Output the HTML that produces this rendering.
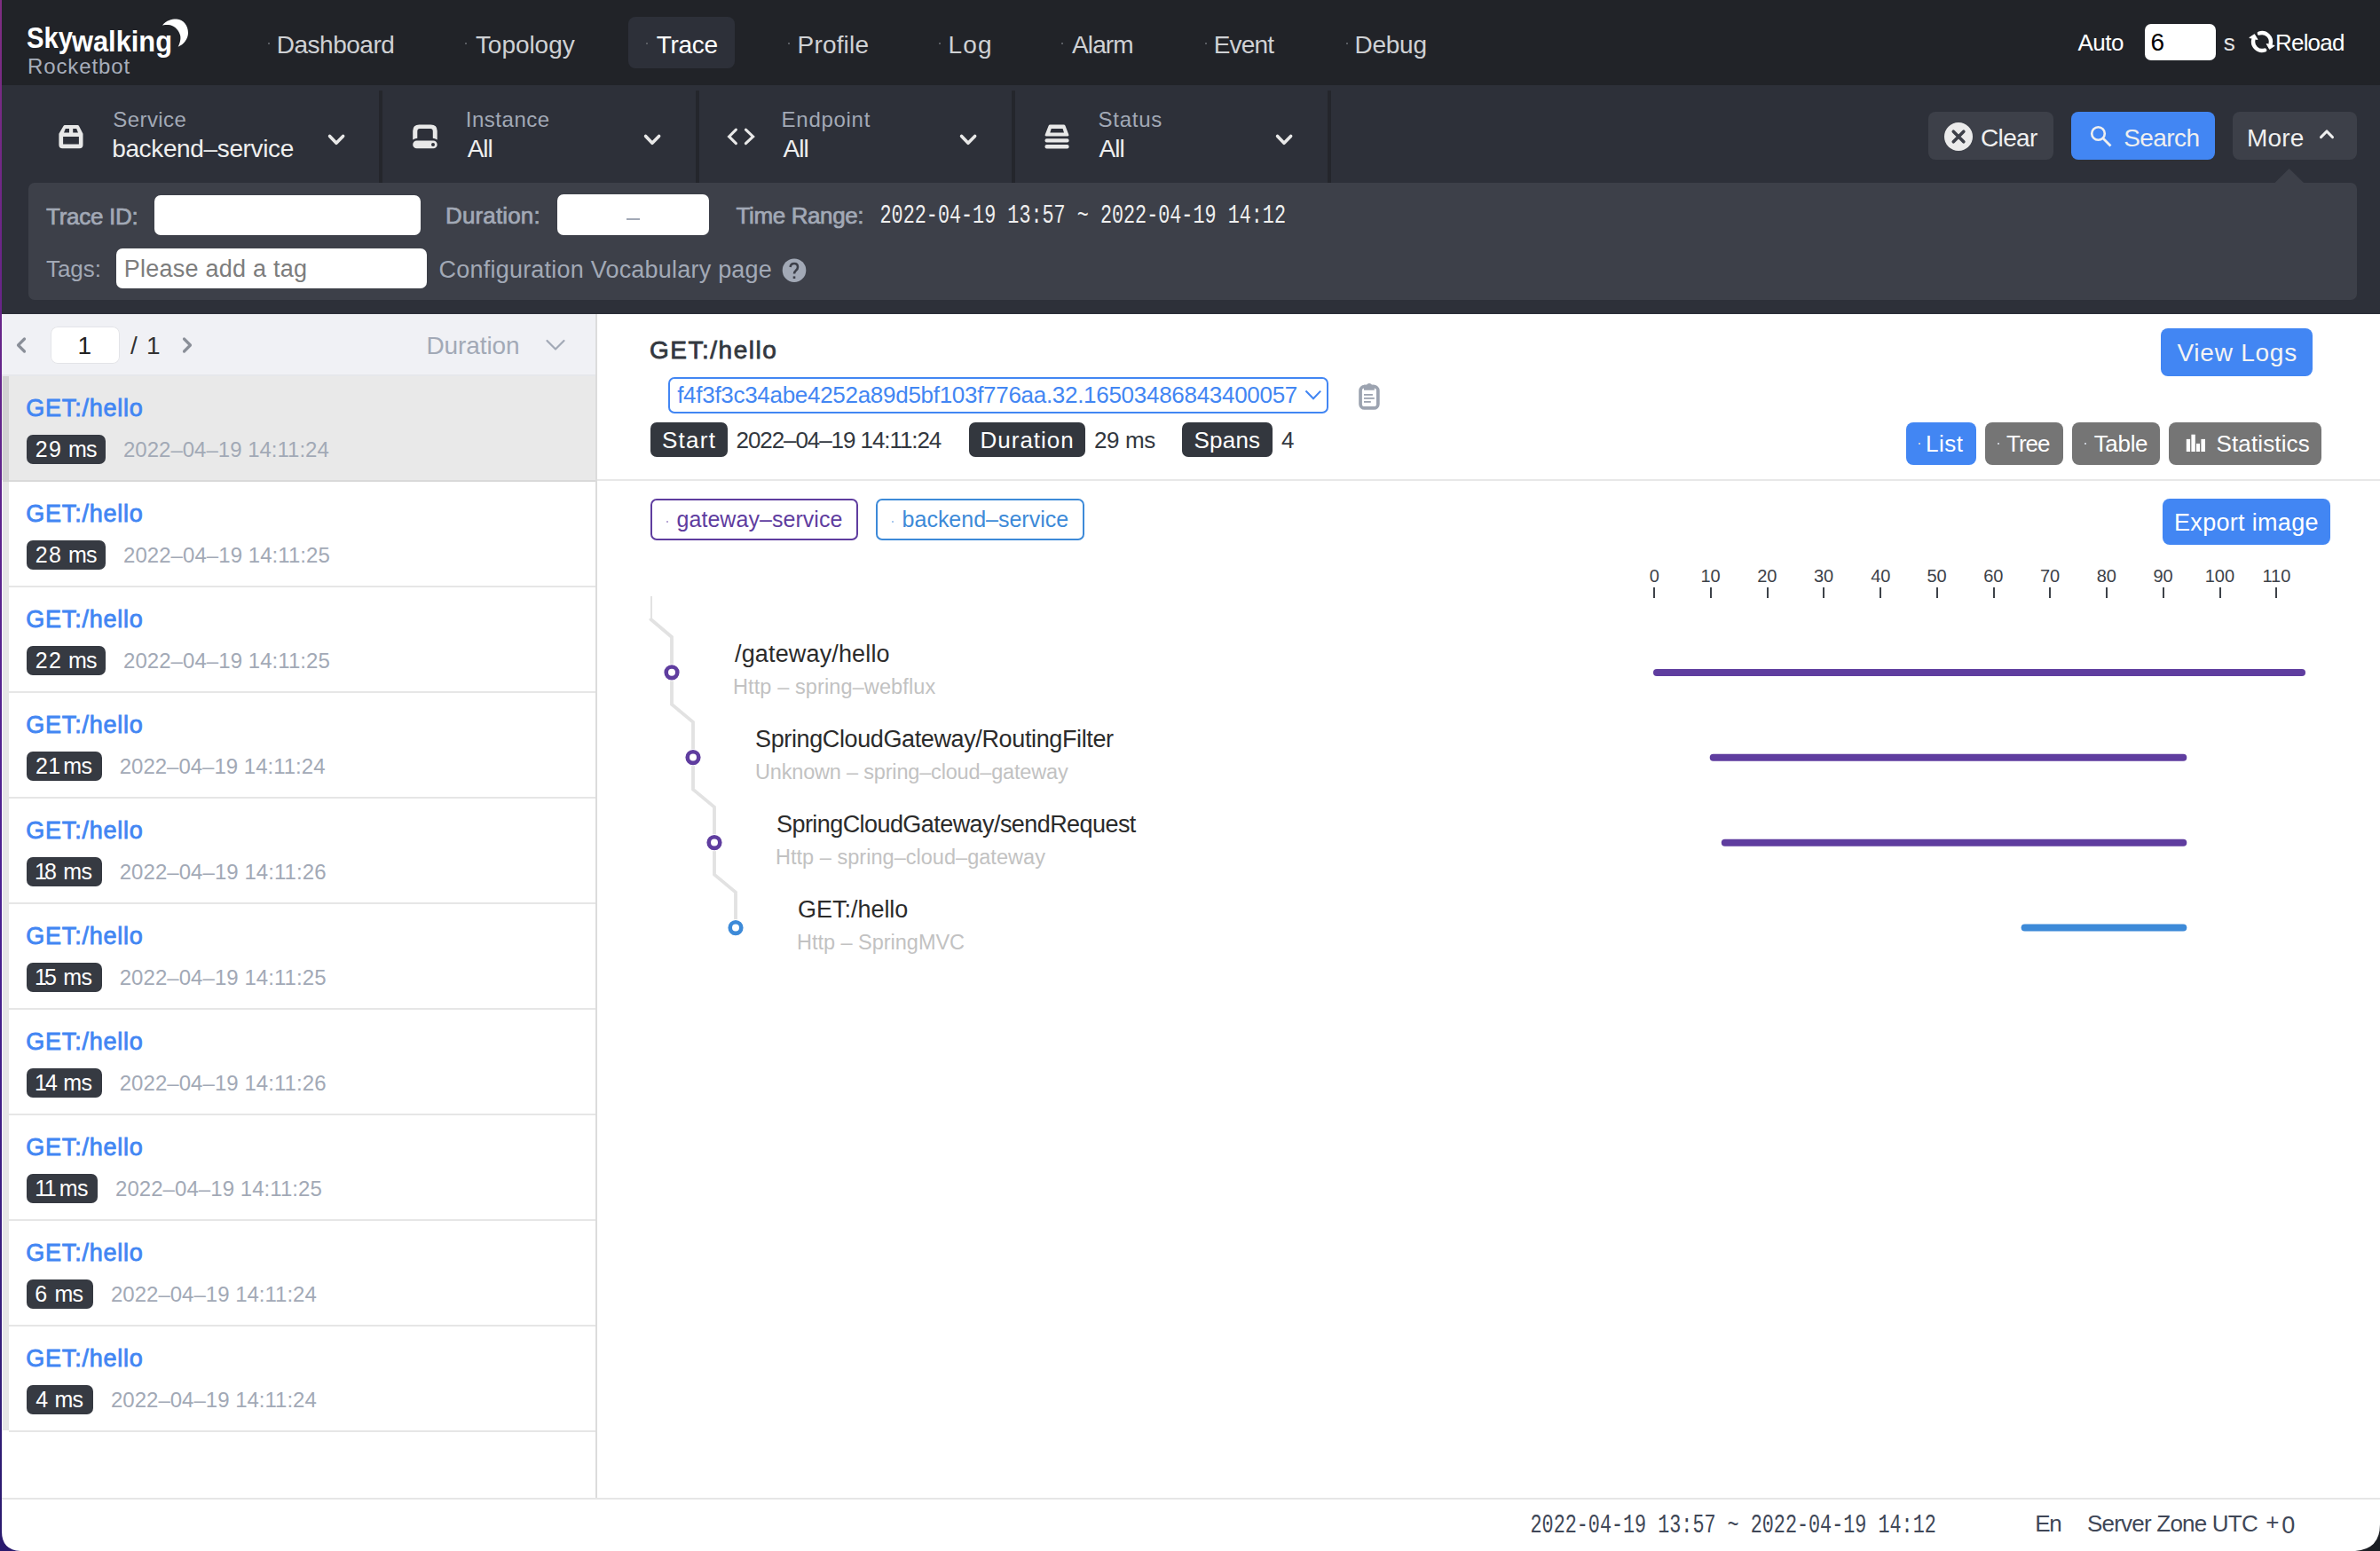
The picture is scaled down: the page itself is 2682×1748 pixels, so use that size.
<!DOCTYPE html>
<html><head><meta charset='utf-8'><style>
html,body{margin:0;padding:0;}
body{width:2682px;height:1748px;position:relative;overflow:hidden;background:#fff;font-family:"Liberation Sans",sans-serif;}
.t{position:absolute;white-space:pre;line-height:1;}
</style></head><body>
<div style='position:absolute;left:0px;top:0px;width:2682px;height:96px;background:#212328;border-radius:0px;'></div>
<div style='position:absolute;left:0px;top:96px;width:2682px;height:258px;background:#2d3039;border-radius:0px;'></div>
<div style='position:absolute;left:708px;top:19px;width:120px;height:58px;background:#2d3039;border-radius:8px;'></div>
<div style='position:absolute;left:302px;top:48px;width:2px;height:2px;background:#5a5d63;border-radius:0px;'></div>
<div style='position:absolute;left:523.7px;top:48px;width:2.0px;height:2px;background:#5a5d63;border-radius:0px;'></div>
<div style='position:absolute;left:727.5px;top:48px;width:2.0px;height:2px;background:#5a5d63;border-radius:0px;'></div>
<div style='position:absolute;left:887.8px;top:48px;width:2.0px;height:2px;background:#5a5d63;border-radius:0px;'></div>
<div style='position:absolute;left:1057.8px;top:48px;width:2.0px;height:2px;background:#5a5d63;border-radius:0px;'></div>
<div style='position:absolute;left:1196px;top:48px;width:2px;height:2px;background:#5a5d63;border-radius:0px;'></div>
<div style='position:absolute;left:1357.8px;top:48px;width:2.0px;height:2px;background:#5a5d63;border-radius:0px;'></div>
<div style='position:absolute;left:1516.6px;top:48px;width:2.0px;height:2px;background:#5a5d63;border-radius:0px;'></div>
<svg style='position:absolute;left:0;top:0' width='230' height='96'>
<text x='30' y='54' font-family='Liberation Sans' font-weight='700' font-size='33' fill='#fff' textLength='52' lengthAdjust='spacingAndGlyphs'>Sky</text>
<text x='81' y='58' font-family='Liberation Sans' font-weight='700' font-size='33' fill='#fff' textLength='113' lengthAdjust='spacingAndGlyphs'>walking</text>
<path d='M183,28.5 C188,22.5 194,21.3 199,21.5 C207,22.2 212,29 212,37 C212,44 207,50 200.7,52.8 C203.5,47 204,42.5 202.8,39 C201,33 195.5,28.2 189.7,28 C187,28 185,28.1 183,28.5 Z' fill='#fff'/>
</svg>
<div style='position:absolute;left:2417px;top:27px;width:80px;height:41px;background:#ffffff;border-radius:7px;'></div>
<svg style='position:absolute;left:2530px;top:30px' width='40' height='34' viewBox='0 0 40 34'>
<path d='M15.9,7.5 A10,10 0 0 1 28.6,19.5' fill='none' stroke='#fff' stroke-width='4.4' stroke-linecap='round'/>
<path d='M24.2,19.5 L33.2,21.5 L27.5,25.3 Z' fill='#fff' stroke='#fff' stroke-width='1' stroke-linejoin='round'/>
<path d='M22.1,26.5 A10,10 0 0 1 9.4,14.5' fill='none' stroke='#fff' stroke-width='4.4' stroke-linecap='round'/>
<path d='M14,14.5 L4.8,12.5 L10.5,8.7 Z' fill='#fff' stroke='#fff' stroke-width='1' stroke-linejoin='round'/>
</svg>
<div style='position:absolute;left:427px;top:102px;width:4px;height:104px;background:#24262c;border-radius:0px;'></div>
<div style='position:absolute;left:784px;top:102px;width:4px;height:104px;background:#24262c;border-radius:0px;'></div>
<div style='position:absolute;left:1140px;top:102px;width:4px;height:104px;background:#24262c;border-radius:0px;'></div>
<div style='position:absolute;left:1496px;top:102px;width:4px;height:104px;background:#24262c;border-radius:0px;'></div>
<svg style='position:absolute;left:60px;top:134px' width='40' height='40' viewBox='0 0 40 40'>
<path fill-rule='evenodd' fill='#e8e8e8' d='M13,7 L27.5,7 Q28.5,7 29,8 L33.5,16.8 L33.5,29.3 Q33.5,33.3 29.5,33.3 L10.4,33.3 Q6.4,33.3 6.4,29.3 L6.4,16.8 L11.5,8 Q12,7 13,7 Z M13.8,11 L18,11 L18,15.5 L12,15.5 Z M22.2,11 L26.2,11 L28,15.5 L22.2,15.5 Z M11.1,20.1 L28.9,20.1 L28.9,28.6 L11.1,28.6 Z'/>
</svg>
<svg style='position:absolute;left:460px;top:134px' width='40' height='40' viewBox='0 0 40 40'>
<path fill-rule='evenodd' fill='#e8e8e8' d='M12.5,6.4 L25.5,6.4 Q32.7,6.4 32.7,13.5 L32.7,23.6 Q30,22 27.8,21.8 L27.8,14 Q27.8,11.1 25,11.1 L13,11.1 Q10.3,11.1 10.3,14 L10.3,21.8 Q8,22 5.2,23.6 L5.2,13.5 Q5.2,6.4 12.5,6.4 Z'/>
<path fill-rule='evenodd' fill='#e8e8e8' d='M9.6,24.5 L28.3,24.5 A4.4,4.4 0 0 1 28.3,33.3 L9.6,33.3 A4.4,4.4 0 0 1 9.6,24.5 Z M28,26.9 A2,2 0 1 0 28,30.9 A2,2 0 1 0 28,26.9 Z'/>
</svg>
<svg style='position:absolute;left:815px;top:138px' width='40' height='32' viewBox='0 0 40 32'>
<path d='M14.4,8.2 L6.6,15.9 L14.4,23.7 M25.4,8.2 L33.6,15.9 L25.4,23.7' fill='none' stroke='#e8e8e8' stroke-width='3.1' stroke-linecap='round' stroke-linejoin='miter'/>
</svg>
<svg style='position:absolute;left:1170px;top:134px' width='40' height='40' viewBox='0 0 40 40'>
<path fill-rule='evenodd' fill='#e8e8e8' d='M13.5,6.4 L28.6,6.4 Q30,6.4 30.5,7.8 L34.3,17.8 Q35,19.6 33,19.6 L9,19.6 Q7,19.6 7.7,17.8 L11.6,7.8 Q12,6.4 13.5,6.4 Z M14.7,11.1 L27.6,11.1 L29,15.5 L13.3,15.5 Z'/>
<rect x='7.5' y='22.2' width='27.1' height='4.4' rx='2' fill='#e8e8e8'/>
<rect x='7.5' y='29.1' width='27.1' height='4.4' rx='2' fill='#e8e8e8'/>
</svg>
<svg style='position:absolute;left:364px;top:145px' width='30' height='25' viewBox='0 0 30 25'>
<path d='M7.6,8.4 L15,16.3 L22.6,8.4' fill='none' stroke='#e8e8e8' stroke-width='3.6' stroke-linecap='round' stroke-linejoin='round'/></svg>
<svg style='position:absolute;left:720px;top:145px' width='30' height='25' viewBox='0 0 30 25'>
<path d='M7.6,8.4 L15,16.3 L22.6,8.4' fill='none' stroke='#e8e8e8' stroke-width='3.6' stroke-linecap='round' stroke-linejoin='round'/></svg>
<svg style='position:absolute;left:1076px;top:145px' width='30' height='25' viewBox='0 0 30 25'>
<path d='M7.6,8.4 L15,16.3 L22.6,8.4' fill='none' stroke='#e8e8e8' stroke-width='3.6' stroke-linecap='round' stroke-linejoin='round'/></svg>
<svg style='position:absolute;left:1432px;top:145px' width='30' height='25' viewBox='0 0 30 25'>
<path d='M7.6,8.4 L15,16.3 L22.6,8.4' fill='none' stroke='#e8e8e8' stroke-width='3.6' stroke-linecap='round' stroke-linejoin='round'/></svg>
<div style='position:absolute;left:2173px;top:126px;width:141px;height:54px;background:#3d4049;border-radius:8px;'></div>
<svg style='position:absolute;left:2191px;top:138px' width='33' height='33' viewBox='0 0 33 33'>
<circle cx='16' cy='16' r='16' fill='#ebebeb'/><path d='M10.3,10.3 L21.8,21.8 M21.8,10.3 L10.3,21.8' stroke='#3d4049' stroke-width='3.7' stroke-linecap='round'/></svg>
<div style='position:absolute;left:2334px;top:126px;width:162px;height:54px;background:#4286f3;border-radius:8px;'></div>
<svg style='position:absolute;left:2354px;top:140px' width='28' height='28' viewBox='0 0 28 28'>
<circle cx='10.5' cy='10.5' r='7.3' fill='none' stroke='#efefef' stroke-width='2.6'/><path d='M16,16 L23.5,23.5' stroke='#efefef' stroke-width='2.8' stroke-linecap='square'/></svg>
<div style='position:absolute;left:2516px;top:126px;width:140px;height:54px;background:#3d4049;border-radius:8px;'></div>
<svg style='position:absolute;left:2610px;top:141px' width='24' height='20' viewBox='0 0 24 20'>
<path d='M5.6,13.5 L12,7 L18.4,13.5' fill='none' stroke='#efefef' stroke-width='3.2' stroke-linecap='round' stroke-linejoin='round'/></svg>
<svg style='position:absolute;left:2560px;top:188px' width='40' height='20'><path d='M3.5,18 L19.6,2 L36,18 Z' fill='#3d4049'/></svg>
<div style='position:absolute;left:32px;top:206px;width:2624px;height:132px;background:#3d4049;border-radius:7px;'></div>
<div style='position:absolute;left:174px;top:220px;width:300px;height:45px;background:#ffffff;border-radius:7px;'></div>
<div style='position:absolute;left:628px;top:219px;width:171px;height:46px;background:#ffffff;border-radius:7px;'></div>
<div style='position:absolute;left:706px;top:246px;width:15px;height:2px;background:#a2a9b6;border-radius:0px;'></div>
<div style='position:absolute;left:131px;top:280px;width:350px;height:45px;background:#ffffff;border-radius:7px;'></div>
<svg style='position:absolute;left:881px;top:291px' width='28' height='28' viewBox='0 0 28 28'>
<circle cx='14' cy='13.7' r='13.3' fill='#a2a9b6'/>
<path d='M9.6,10 Q10,6 14,6 Q18,6 18,10 Q18,12.3 15.8,14 Q14,15.4 14,17.6' fill='none' stroke='#3d4049' stroke-width='2.6'/>
<rect x='12.7' y='20.4' width='2.6' height='2.6' fill='#3d4049'/></svg>
<div style='position:absolute;left:0px;top:354px;width:672px;height:1335px;background:#ffffff;border-radius:0px;'></div>
<div style='position:absolute;left:2px;top:354px;width:670px;height:68px;background:#f0f1f5;border-radius:0px;'></div>
<div style='position:absolute;left:2px;top:422px;width:670px;height:2px;background:#e6e7eb;border-radius:0px;'></div>
<div style='position:absolute;left:57px;top:368px;width:78px;height:42px;background:#ffffff;border-radius:8px;box-shadow:0 0 0 1px #e3e4e8 inset'></div>
<svg style='position:absolute;left:10px;top:376px' width='30' height='26' viewBox='0 0 30 26'>
<path d='M17.5,6 L10.5,13 L17.5,20' fill='none' stroke='#8a8f98' stroke-width='3.2' stroke-linecap='round' stroke-linejoin='round'/></svg>
<svg style='position:absolute;left:197px;top:376px' width='30' height='26' viewBox='0 0 30 26'>
<path d='M10.5,6 L17.5,13 L10.5,20' fill='none' stroke='#8a8f98' stroke-width='3.2' stroke-linecap='round' stroke-linejoin='round'/></svg>
<svg style='position:absolute;left:610px;top:378px' width='32' height='22' viewBox='0 0 32 22'>
<path d='M6.5,6 L16,15.5 L25.5,6' fill='none' stroke='#a2a9b6' stroke-width='2.2' stroke-linecap='round' stroke-linejoin='round'/></svg>
<div style='position:absolute;left:2px;top:424px;width:670px;height:117px;background:#e9e9e9;border-radius:0px;'></div>
<div style='position:absolute;left:3px;top:424px;width:7px;height:119px;background:#d2d2d2;border-radius:0px;'></div>
<div style='position:absolute;left:10px;top:541px;width:662px;height:2px;background:#d9d9d9;border-radius:0px;'></div>
<div style='position:absolute;left:30px;top:490px;width:89px;height:33px;background:#363a42;border-radius:7px;'></div>
<div style='position:absolute;left:3px;top:543px;width:7px;height:119px;background:#e6e6e6;border-radius:0px;'></div>
<div style='position:absolute;left:10px;top:660px;width:662px;height:2px;background:#e6e6e6;border-radius:0px;'></div>
<div style='position:absolute;left:30px;top:609px;width:89px;height:33px;background:#363a42;border-radius:7px;'></div>
<div style='position:absolute;left:3px;top:662px;width:7px;height:119px;background:#e6e6e6;border-radius:0px;'></div>
<div style='position:absolute;left:10px;top:779px;width:662px;height:2px;background:#e6e6e6;border-radius:0px;'></div>
<div style='position:absolute;left:30px;top:728px;width:89px;height:33px;background:#363a42;border-radius:7px;'></div>
<div style='position:absolute;left:3px;top:781px;width:7px;height:119px;background:#e6e6e6;border-radius:0px;'></div>
<div style='position:absolute;left:10px;top:898px;width:662px;height:2px;background:#e6e6e6;border-radius:0px;'></div>
<div style='position:absolute;left:30px;top:847px;width:84.7px;height:33px;background:#363a42;border-radius:7px;'></div>
<div style='position:absolute;left:3px;top:900px;width:7px;height:119px;background:#e6e6e6;border-radius:0px;'></div>
<div style='position:absolute;left:10px;top:1017px;width:662px;height:2px;background:#e6e6e6;border-radius:0px;'></div>
<div style='position:absolute;left:30px;top:966px;width:84.7px;height:33px;background:#363a42;border-radius:7px;'></div>
<div style='position:absolute;left:3px;top:1019px;width:7px;height:119px;background:#e6e6e6;border-radius:0px;'></div>
<div style='position:absolute;left:10px;top:1136px;width:662px;height:2px;background:#e6e6e6;border-radius:0px;'></div>
<div style='position:absolute;left:30px;top:1085px;width:84.7px;height:33px;background:#363a42;border-radius:7px;'></div>
<div style='position:absolute;left:3px;top:1138px;width:7px;height:119px;background:#e6e6e6;border-radius:0px;'></div>
<div style='position:absolute;left:10px;top:1255px;width:662px;height:2px;background:#e6e6e6;border-radius:0px;'></div>
<div style='position:absolute;left:30px;top:1204px;width:84.7px;height:33px;background:#363a42;border-radius:7px;'></div>
<div style='position:absolute;left:3px;top:1257px;width:7px;height:119px;background:#e6e6e6;border-radius:0px;'></div>
<div style='position:absolute;left:10px;top:1374px;width:662px;height:2px;background:#e6e6e6;border-radius:0px;'></div>
<div style='position:absolute;left:30px;top:1323px;width:80px;height:33px;background:#363a42;border-radius:7px;'></div>
<div style='position:absolute;left:3px;top:1376px;width:7px;height:119px;background:#e6e6e6;border-radius:0px;'></div>
<div style='position:absolute;left:10px;top:1493px;width:662px;height:2px;background:#e6e6e6;border-radius:0px;'></div>
<div style='position:absolute;left:30px;top:1442px;width:75px;height:33px;background:#363a42;border-radius:7px;'></div>
<div style='position:absolute;left:3px;top:1495px;width:7px;height:119px;background:#e6e6e6;border-radius:0px;'></div>
<div style='position:absolute;left:10px;top:1612px;width:662px;height:2px;background:#e6e6e6;border-radius:0px;'></div>
<div style='position:absolute;left:30px;top:1561px;width:75px;height:33px;background:#363a42;border-radius:7px;'></div>
<div style='position:absolute;left:2px;top:1612px;width:8px;height:77px;background:#ffffff;border-radius:0px;'></div>
<div style='position:absolute;left:671px;top:354px;width:2px;height:1335px;background:#dcdcdc;border-radius:0px;'></div>
<div style='position:absolute;left:753px;top:425px;width:744px;height:41px;background:transparent;border-radius:7px;box-shadow:inset 0 0 0 2px #4286f3'></div>
<svg style='position:absolute;left:1463px;top:436px' width='30' height='20' viewBox='0 0 30 20'>
<path d='M8.5,4.6 L17,13.2 L25.2,4.6' fill='none' stroke='#4286f3' stroke-width='2.1' stroke-linecap='butt' stroke-linejoin='miter'/></svg>
<svg style='position:absolute;left:1525px;top:428px' width='37' height='38' viewBox='0 0 37 38'>
<rect x='8.05' y='7.65' width='19.8' height='24.3' rx='4.5' fill='none' stroke='#9ca3b0' stroke-width='3.7'/>
<path d='M12,5.8 L15,5.8 Q16,4 18,4 Q20,4 21,5.8 L23.8,5.8 L23.8,11.7 L12,11.7 Z' fill='#9ca3b0'/>
<rect x='12' y='16' width='9.9' height='1.8' fill='#9ca3b0'/><rect x='12' y='20' width='11.8' height='1.8' fill='#9ca3b0'/><rect x='12' y='24' width='7.8' height='1.8' fill='#9ca3b0'/>
</svg>
<div style='position:absolute;left:733px;top:476px;width:87px;height:39px;background:#33373e;border-radius:7px;'></div>
<div style='position:absolute;left:1092px;top:476px;width:131px;height:39px;background:#33373e;border-radius:7px;'></div>
<div style='position:absolute;left:1332px;top:476px;width:102px;height:39px;background:#33373e;border-radius:7px;'></div>
<div style='position:absolute;left:2435px;top:370px;width:171px;height:54px;background:#4286f3;border-radius:8px;'></div>
<div style='position:absolute;left:2148px;top:476px;width:79px;height:48px;background:#4286f3;border-radius:8px;'></div>
<div style='position:absolute;left:2237px;top:476px;width:88px;height:48px;background:#757575;border-radius:8px;'></div>
<div style='position:absolute;left:2335px;top:476px;width:99px;height:48px;background:#757575;border-radius:8px;'></div>
<div style='position:absolute;left:2444px;top:476px;width:172px;height:48px;background:#757575;border-radius:8px;'></div>
<svg style='position:absolute;left:2460px;top:486px' width='28' height='26' viewBox='0 0 28 26'>
<rect x='3.8' y='8.9' width='4.3' height='14.1' fill='#fff'/><rect x='9.4' y='3.7' width='4.4' height='19.3' fill='#fff'/><rect x='15' y='13.9' width='4' height='9.1' fill='#fff'/><rect x='20.4' y='8.9' width='4.6' height='14.1' fill='#fff'/></svg>
<div style='position:absolute;left:2162px;top:499px;width:2px;height:2px;background:#c8ccd4;border-radius:0px;'></div>
<div style='position:absolute;left:2251px;top:499px;width:2px;height:2px;background:#c8ccd4;border-radius:0px;'></div>
<div style='position:absolute;left:2349px;top:499px;width:2px;height:2px;background:#c8ccd4;border-radius:0px;'></div>
<div style='position:absolute;left:673px;top:540px;width:2009px;height:2px;background:#e8e8e8;border-radius:0px;'></div>
<div style='position:absolute;left:733px;top:562px;width:234px;height:47px;background:transparent;border-radius:7px;box-shadow:inset 0 0 0 2px #5f3d9f'></div>
<div style='position:absolute;left:987px;top:562px;width:235px;height:47px;background:transparent;border-radius:7px;box-shadow:inset 0 0 0 2px #3d8ad8'></div>
<div style='position:absolute;left:751px;top:587px;width:2px;height:2px;background:#b9a8d6;border-radius:0px;'></div>
<div style='position:absolute;left:1005px;top:587px;width:2px;height:2px;background:#a9c9ee;border-radius:0px;'></div>
<div style='position:absolute;left:2437px;top:562px;width:189px;height:52px;background:#4286f3;border-radius:8px;'></div>
<div style='position:absolute;left:1863.20px;top:662px;width:2px;height:12px;background:#3d4249'></div>
<div style='position:absolute;left:1926.95px;top:662px;width:2px;height:12px;background:#3d4249'></div>
<div style='position:absolute;left:1990.70px;top:662px;width:2px;height:12px;background:#3d4249'></div>
<div style='position:absolute;left:2054.45px;top:662px;width:2px;height:12px;background:#3d4249'></div>
<div style='position:absolute;left:2118.20px;top:662px;width:2px;height:12px;background:#3d4249'></div>
<div style='position:absolute;left:2181.95px;top:662px;width:2px;height:12px;background:#3d4249'></div>
<div style='position:absolute;left:2245.70px;top:662px;width:2px;height:12px;background:#3d4249'></div>
<div style='position:absolute;left:2309.45px;top:662px;width:2px;height:12px;background:#3d4249'></div>
<div style='position:absolute;left:2373.20px;top:662px;width:2px;height:12px;background:#3d4249'></div>
<div style='position:absolute;left:2436.95px;top:662px;width:2px;height:12px;background:#3d4249'></div>
<div style='position:absolute;left:2500.70px;top:662px;width:2px;height:12px;background:#3d4249'></div>
<div style='position:absolute;left:2564.45px;top:662px;width:2px;height:12px;background:#3d4249'></div>
<div style='position:absolute;left:733px;top:672px;width:2px;height:26px;background:#e2e2e2;border-radius:0px;'></div>
<svg style='position:absolute;left:0;top:0' width='2682' height='1748'><path d='M733.5,697 L733.5,698 L757,718 L757,757.8 L757,793.8 L781,813.8 L781,853.6 L781,889.6 L805,909.6 L805,949.6 L805,985.6 L829,1005.6 L829,1045.6' fill='none' stroke='#e2e2e2' stroke-width='3.8' stroke-linejoin='miter'/><circle cx='757' cy='757.8' r='9.6' fill='#fff'/><circle cx='757' cy='757.8' r='6.3' fill='#fff' stroke='#5f3d9f' stroke-width='4.6'/><circle cx='781' cy='853.6' r='9.6' fill='#fff'/><circle cx='781' cy='853.6' r='6.3' fill='#fff' stroke='#5f3d9f' stroke-width='4.6'/><circle cx='805' cy='949.6' r='9.6' fill='#fff'/><circle cx='805' cy='949.6' r='6.3' fill='#fff' stroke='#5f3d9f' stroke-width='4.6'/><circle cx='829' cy='1045.6' r='9.6' fill='#fff'/><circle cx='829' cy='1045.6' r='6.3' fill='#fff' stroke='#3d8ad8' stroke-width='4.6'/><line x1='1867' y1='757.9' x2='2594' y2='757.9' stroke='#5f3d9f' stroke-width='8' stroke-linecap='round'/><line x1='1930.7' y1='853.8' x2='2460.3' y2='853.8' stroke='#5f3d9f' stroke-width='8' stroke-linecap='round'/><line x1='1943.8' y1='949.7' x2='2460.3' y2='949.7' stroke='#5f3d9f' stroke-width='8' stroke-linecap='round'/><line x1='2281.6' y1='1045.5' x2='2460.3' y2='1045.5' stroke='#3d8ad8' stroke-width='8' stroke-linecap='round'/></svg>
<div style='position:absolute;left:0px;top:1688px;width:2682px;height:2px;background:#e6e6e6;border-radius:0px;'></div>
<div style='position:absolute;left:0px;top:0px;width:2px;height:1748px;background:linear-gradient(#7f2d82,#6a2588 300px,#4a2090 1000px,#2a1a6e);border-radius:0px;'></div>
<svg style='position:absolute;left:0;top:1726px' width='24' height='22'><path d='M0,0 L2,0 Q2,21 23,22 L0,22 Z' fill='#2a1a6e'/></svg>
<svg style='position:absolute;left:2652px;top:1718px' width='30' height='30'><path d='M30,0 L30,0 Q30,28 2,30 L30,30 Z' fill='#1c1e24'/></svg>
<div class='t' style='left:311.80px;top:37.30px;font-family:"Liberation Sans";font-size:28px;font-weight:400;color:#cfd1d4;letter-spacing:-0.500px;'>Dashboard</div>
<div class='t' style='left:535.90px;top:37.30px;font-family:"Liberation Sans";font-size:28px;font-weight:400;color:#cfd1d4;letter-spacing:-0.043px;'>Topology</div>
<div class='t' style='left:739.70px;top:37.30px;font-family:"Liberation Sans";font-size:28px;font-weight:400;color:#ffffff;letter-spacing:-0.300px;'>Trace</div>
<div class='t' style='left:898.60px;top:37.30px;font-family:"Liberation Sans";font-size:28px;font-weight:400;color:#cfd1d4;letter-spacing:0.167px;'>Profile</div>
<div class='t' style='left:1068.60px;top:37.30px;font-family:"Liberation Sans";font-size:28px;font-weight:400;color:#cfd1d4;letter-spacing:1.150px;'>Log</div>
<div class='t' style='left:1208.00px;top:37.30px;font-family:"Liberation Sans";font-size:28px;font-weight:400;color:#cfd1d4;letter-spacing:-0.875px;'>Alarm</div>
<div class='t' style='left:1367.70px;top:37.30px;font-family:"Liberation Sans";font-size:28px;font-weight:400;color:#cfd1d4;letter-spacing:-0.800px;'>Event</div>
<div class='t' style='left:1526.50px;top:37.30px;font-family:"Liberation Sans";font-size:28px;font-weight:400;color:#cfd1d4;letter-spacing:-0.250px;'>Debug</div>
<div class='t' style='left:31.00px;top:62.60px;font-family:"Liberation Sans";font-size:24px;font-weight:400;color:#a7aebb;letter-spacing:0.875px;'>Rocketbot</div>
<div class='t' style='left:2341.40px;top:35.00px;font-family:"Liberation Sans";font-size:26px;font-weight:400;color:#ffffff;letter-spacing:-0.467px;'>Auto</div>
<div class='t' style='left:2423.40px;top:34.00px;font-family:"Liberation Sans";font-size:28px;font-weight:400;color:#000000;'>6</div>
<div class='t' style='left:2505.70px;top:35.00px;font-family:"Liberation Sans";font-size:26px;font-weight:400;color:#e8e8e8;'>s</div>
<div class='t' style='left:2564.00px;top:35.00px;font-family:"Liberation Sans";font-size:26px;font-weight:400;color:#ffffff;letter-spacing:-0.800px;'>Reload</div>
<div class='t' style='left:127.20px;top:123.20px;font-family:"Liberation Sans";font-size:24px;font-weight:400;color:#a2a9b6;letter-spacing:0.450px;'>Service</div>
<div class='t' style='left:126.20px;top:153.50px;font-family:"Liberation Sans";font-size:28px;font-weight:400;color:#efefef;letter-spacing:-0.357px;'>backend–service</div>
<div class='t' style='left:524.70px;top:123.20px;font-family:"Liberation Sans";font-size:24px;font-weight:400;color:#a2a9b6;letter-spacing:0.543px;'>Instance</div>
<div class='t' style='left:526.70px;top:153.50px;font-family:"Liberation Sans";font-size:28px;font-weight:400;color:#efefef;letter-spacing:-1.000px;'>All</div>
<div class='t' style='left:880.60px;top:123.20px;font-family:"Liberation Sans";font-size:24px;font-weight:400;color:#a2a9b6;letter-spacing:0.714px;'>Endpoint</div>
<div class='t' style='left:882.60px;top:153.50px;font-family:"Liberation Sans";font-size:28px;font-weight:400;color:#efefef;letter-spacing:-1.000px;'>All</div>
<div class='t' style='left:1237.60px;top:123.20px;font-family:"Liberation Sans";font-size:24px;font-weight:400;color:#a2a9b6;letter-spacing:0.720px;'>Status</div>
<div class='t' style='left:1238.60px;top:153.50px;font-family:"Liberation Sans";font-size:28px;font-weight:400;color:#efefef;letter-spacing:-1.000px;'>All</div>
<div class='t' style='left:2232.00px;top:141.80px;font-family:"Liberation Sans";font-size:28px;font-weight:400;color:#efefef;letter-spacing:-0.650px;'>Clear</div>
<div class='t' style='left:2393.30px;top:141.80px;font-family:"Liberation Sans";font-size:28px;font-weight:400;color:#efefef;letter-spacing:-0.600px;'>Search</div>
<div class='t' style='left:2532.00px;top:141.80px;font-family:"Liberation Sans";font-size:28px;font-weight:400;color:#efefef;letter-spacing:0.167px;'>More</div>
<div class='t' style='left:52.00px;top:230.80px;font-family:"Liberation Sans";font-size:26px;font-weight:400;color:#a2a9b6;letter-spacing:-0.275px;-webkit-text-stroke:0.7px #a2a9b6'>Trace ID:</div>
<div class='t' style='left:502.00px;top:229.50px;font-family:"Liberation Sans";font-size:26px;font-weight:400;color:#a2a9b6;letter-spacing:0.150px;-webkit-text-stroke:0.7px #a2a9b6'>Duration:</div>
<div class='t' style='left:829.60px;top:229.50px;font-family:"Liberation Sans";font-size:26px;font-weight:400;color:#a2a9b6;letter-spacing:-0.400px;-webkit-text-stroke:0.7px #a2a9b6'>Time Range:</div>
<div class='t' style='left:990.50px;top:228.30px;font-family:"Liberation Mono";font-size:30px;font-weight:400;color:#efefef;transform:scaleX(0.7260);transform-origin:2px 0;'>2022-04-19 13:57 ~ 2022-04-19 14:12</div>
<div class='t' style='left:52.00px;top:290.00px;font-family:"Liberation Sans";font-size:26px;font-weight:400;color:#a2a9b6;letter-spacing:-0.050px;'>Tags:</div>
<div class='t' style='left:139.70px;top:290.00px;font-family:"Liberation Sans";font-size:27px;font-weight:400;color:#7d7d7d;letter-spacing:0.247px;'>Please add a tag</div>
<div class='t' style='left:494.60px;top:290.60px;font-family:"Liberation Sans";font-size:27px;font-weight:400;color:#a2a9b6;letter-spacing:0.214px;'>Configuration Vocabulary page</div>
<div class='t' style='left:87.50px;top:376.00px;font-family:"Liberation Sans";font-size:28px;font-weight:400;color:#222;'>1</div>
<div class='t' style='left:147.00px;top:376.00px;font-family:"Liberation Sans";font-size:28px;font-weight:400;color:#333;letter-spacing:1.200px;'>/ 1</div>
<div class='t' style='left:480.40px;top:376.40px;font-family:"Liberation Sans";font-size:28px;font-weight:400;color:#a2a9b6;letter-spacing:-0.086px;'>Duration</div>
<div class='t' style='left:29.30px;top:446.70px;font-family:"Liberation Sans";font-size:27px;font-weight:400;color:#4286f3;letter-spacing:0.778px;-webkit-text-stroke:0.8px #4286f3'>GET:/hello</div>
<div class='t' style='left:39.80px;top:494.10px;font-family:"Liberation Sans";font-size:25px;font-weight:400;color:#ffffff;'>2</div>
<div class='t' style='left:55.00px;top:494.10px;font-family:"Liberation Sans";font-size:25px;font-weight:400;color:#ffffff;'>9</div>
<div class='t' style='left:76.90px;top:494.10px;font-family:"Liberation Sans";font-size:25px;font-weight:400;color:#ffffff;letter-spacing:-0.700px;'>ms</div>
<div class='t' style='left:139.00px;top:495.30px;font-family:"Liberation Sans";font-size:24px;font-weight:400;color:#a2a9b6;letter-spacing:0.000px;'>2022–04–19 14:11:24</div>
<div class='t' style='left:29.30px;top:565.70px;font-family:"Liberation Sans";font-size:27px;font-weight:400;color:#4286f3;letter-spacing:0.778px;-webkit-text-stroke:0.8px #4286f3'>GET:/hello</div>
<div class='t' style='left:39.80px;top:613.10px;font-family:"Liberation Sans";font-size:25px;font-weight:400;color:#ffffff;'>2</div>
<div class='t' style='left:55.00px;top:613.10px;font-family:"Liberation Sans";font-size:25px;font-weight:400;color:#ffffff;'>8</div>
<div class='t' style='left:76.90px;top:613.10px;font-family:"Liberation Sans";font-size:25px;font-weight:400;color:#ffffff;letter-spacing:-0.700px;'>ms</div>
<div class='t' style='left:139.00px;top:614.30px;font-family:"Liberation Sans";font-size:24px;font-weight:400;color:#a2a9b6;letter-spacing:0.056px;'>2022–04–19 14:11:25</div>
<div class='t' style='left:29.30px;top:684.70px;font-family:"Liberation Sans";font-size:27px;font-weight:400;color:#4286f3;letter-spacing:0.778px;-webkit-text-stroke:0.8px #4286f3'>GET:/hello</div>
<div class='t' style='left:39.80px;top:732.10px;font-family:"Liberation Sans";font-size:25px;font-weight:400;color:#ffffff;'>2</div>
<div class='t' style='left:55.00px;top:732.10px;font-family:"Liberation Sans";font-size:25px;font-weight:400;color:#ffffff;'>2</div>
<div class='t' style='left:76.90px;top:732.10px;font-family:"Liberation Sans";font-size:25px;font-weight:400;color:#ffffff;letter-spacing:-0.700px;'>ms</div>
<div class='t' style='left:139.00px;top:733.30px;font-family:"Liberation Sans";font-size:24px;font-weight:400;color:#a2a9b6;letter-spacing:0.056px;'>2022–04–19 14:11:25</div>
<div class='t' style='left:29.30px;top:803.70px;font-family:"Liberation Sans";font-size:27px;font-weight:400;color:#4286f3;letter-spacing:0.778px;-webkit-text-stroke:0.8px #4286f3'>GET:/hello</div>
<div class='t' style='left:40.00px;top:851.10px;font-family:"Liberation Sans";font-size:25px;font-weight:400;color:#ffffff;'>2</div>
<div class='t' style='left:54.20px;top:851.10px;font-family:"Liberation Sans";font-size:25px;font-weight:400;color:#ffffff;'>1</div>
<div class='t' style='left:71.30px;top:851.10px;font-family:"Liberation Sans";font-size:25px;font-weight:400;color:#ffffff;letter-spacing:-0.700px;'>ms</div>
<div class='t' style='left:134.70px;top:852.30px;font-family:"Liberation Sans";font-size:24px;font-weight:400;color:#a2a9b6;letter-spacing:0.000px;'>2022–04–19 14:11:24</div>
<div class='t' style='left:29.30px;top:922.70px;font-family:"Liberation Sans";font-size:27px;font-weight:400;color:#4286f3;letter-spacing:0.778px;-webkit-text-stroke:0.8px #4286f3'>GET:/hello</div>
<div class='t' style='left:39.10px;top:970.10px;font-family:"Liberation Sans";font-size:25px;font-weight:400;color:#ffffff;'>1</div>
<div class='t' style='left:50.00px;top:970.10px;font-family:"Liberation Sans";font-size:25px;font-weight:400;color:#ffffff;'>8</div>
<div class='t' style='left:71.30px;top:970.10px;font-family:"Liberation Sans";font-size:25px;font-weight:400;color:#ffffff;letter-spacing:-0.700px;'>ms</div>
<div class='t' style='left:134.70px;top:971.30px;font-family:"Liberation Sans";font-size:24px;font-weight:400;color:#a2a9b6;letter-spacing:0.056px;'>2022–04–19 14:11:26</div>
<div class='t' style='left:29.30px;top:1041.70px;font-family:"Liberation Sans";font-size:27px;font-weight:400;color:#4286f3;letter-spacing:0.778px;-webkit-text-stroke:0.8px #4286f3'>GET:/hello</div>
<div class='t' style='left:39.10px;top:1089.10px;font-family:"Liberation Sans";font-size:25px;font-weight:400;color:#ffffff;'>1</div>
<div class='t' style='left:50.00px;top:1089.10px;font-family:"Liberation Sans";font-size:25px;font-weight:400;color:#ffffff;'>5</div>
<div class='t' style='left:71.30px;top:1089.10px;font-family:"Liberation Sans";font-size:25px;font-weight:400;color:#ffffff;letter-spacing:-0.700px;'>ms</div>
<div class='t' style='left:134.70px;top:1090.30px;font-family:"Liberation Sans";font-size:24px;font-weight:400;color:#a2a9b6;letter-spacing:0.056px;'>2022–04–19 14:11:25</div>
<div class='t' style='left:29.30px;top:1160.70px;font-family:"Liberation Sans";font-size:27px;font-weight:400;color:#4286f3;letter-spacing:0.778px;-webkit-text-stroke:0.8px #4286f3'>GET:/hello</div>
<div class='t' style='left:39.10px;top:1208.10px;font-family:"Liberation Sans";font-size:25px;font-weight:400;color:#ffffff;'>1</div>
<div class='t' style='left:51.00px;top:1208.10px;font-family:"Liberation Sans";font-size:25px;font-weight:400;color:#ffffff;'>4</div>
<div class='t' style='left:71.30px;top:1208.10px;font-family:"Liberation Sans";font-size:25px;font-weight:400;color:#ffffff;letter-spacing:-0.700px;'>ms</div>
<div class='t' style='left:134.70px;top:1209.30px;font-family:"Liberation Sans";font-size:24px;font-weight:400;color:#a2a9b6;letter-spacing:0.056px;'>2022–04–19 14:11:26</div>
<div class='t' style='left:29.30px;top:1279.70px;font-family:"Liberation Sans";font-size:27px;font-weight:400;color:#4286f3;letter-spacing:0.778px;-webkit-text-stroke:0.8px #4286f3'>GET:/hello</div>
<div class='t' style='left:39.20px;top:1327.10px;font-family:"Liberation Sans";font-size:25px;font-weight:400;color:#ffffff;'>1</div>
<div class='t' style='left:49.70px;top:1327.10px;font-family:"Liberation Sans";font-size:25px;font-weight:400;color:#ffffff;'>1</div>
<div class='t' style='left:66.80px;top:1327.10px;font-family:"Liberation Sans";font-size:25px;font-weight:400;color:#ffffff;letter-spacing:-0.700px;'>ms</div>
<div class='t' style='left:130.00px;top:1328.30px;font-family:"Liberation Sans";font-size:24px;font-weight:400;color:#a2a9b6;letter-spacing:0.056px;'>2022–04–19 14:11:25</div>
<div class='t' style='left:29.30px;top:1398.70px;font-family:"Liberation Sans";font-size:27px;font-weight:400;color:#4286f3;letter-spacing:0.778px;-webkit-text-stroke:0.8px #4286f3'>GET:/hello</div>
<div class='t' style='left:39.20px;top:1446.10px;font-family:"Liberation Sans";font-size:25px;font-weight:400;color:#ffffff;'>6</div>
<div class='t' style='left:61.40px;top:1446.10px;font-family:"Liberation Sans";font-size:25px;font-weight:400;color:#ffffff;letter-spacing:-0.700px;'>ms</div>
<div class='t' style='left:125.00px;top:1447.30px;font-family:"Liberation Sans";font-size:24px;font-weight:400;color:#a2a9b6;letter-spacing:0.000px;'>2022–04–19 14:11:24</div>
<div class='t' style='left:29.30px;top:1517.70px;font-family:"Liberation Sans";font-size:27px;font-weight:400;color:#4286f3;letter-spacing:0.778px;-webkit-text-stroke:0.8px #4286f3'>GET:/hello</div>
<div class='t' style='left:40.20px;top:1565.10px;font-family:"Liberation Sans";font-size:25px;font-weight:400;color:#ffffff;'>4</div>
<div class='t' style='left:61.40px;top:1565.10px;font-family:"Liberation Sans";font-size:25px;font-weight:400;color:#ffffff;letter-spacing:-0.700px;'>ms</div>
<div class='t' style='left:125.00px;top:1566.30px;font-family:"Liberation Sans";font-size:24px;font-weight:400;color:#a2a9b6;letter-spacing:0.000px;'>2022–04–19 14:11:24</div>
<div class='t' style='left:732.00px;top:381.20px;font-family:"Liberation Sans";font-size:28px;font-weight:400;color:#333840;letter-spacing:1.511px;-webkit-text-stroke:0.8px #333840'>GET:/hello</div>
<div class='t' style='left:763.20px;top:432.10px;font-family:"Liberation Sans";font-size:26px;font-weight:400;color:#4286f3;letter-spacing:-0.292px;'>f4f3f3c34abe4252a89d5bf103f776aa.32.16503486843400057</div>
<div class='t' style='left:746.00px;top:483.00px;font-family:"Liberation Sans";font-size:26px;font-weight:400;color:#ffffff;letter-spacing:1.250px;'>Start</div>
<div class='t' style='left:829.50px;top:483.00px;font-family:"Liberation Sans";font-size:26px;font-weight:400;color:#333840;letter-spacing:-1.072px;'>2022–04–19 14:11:24</div>
<div class='t' style='left:1104.60px;top:483.00px;font-family:"Liberation Sans";font-size:26px;font-weight:400;color:#ffffff;letter-spacing:0.971px;'>Duration</div>
<div class='t' style='left:1233.00px;top:483.00px;font-family:"Liberation Sans";font-size:26px;font-weight:400;color:#333840;letter-spacing:-0.400px;'>29 ms</div>
<div class='t' style='left:1345.40px;top:483.00px;font-family:"Liberation Sans";font-size:26px;font-weight:400;color:#ffffff;letter-spacing:0.250px;'>Spans</div>
<div class='t' style='left:1444.00px;top:483.00px;font-family:"Liberation Sans";font-size:26px;font-weight:400;color:#333840;'>4</div>
<div class='t' style='left:2453.40px;top:384.00px;font-family:"Liberation Sans";font-size:28px;font-weight:400;color:#f4f4f4;letter-spacing:0.762px;'>View Logs</div>
<div class='t' style='left:2170.00px;top:486.50px;font-family:"Liberation Sans";font-size:26px;font-weight:400;color:#ffffff;letter-spacing:0.533px;'>List</div>
<div class='t' style='left:2261.00px;top:486.50px;font-family:"Liberation Sans";font-size:26px;font-weight:400;color:#ffffff;letter-spacing:-1.000px;'>Tree</div>
<div class='t' style='left:2359.70px;top:486.50px;font-family:"Liberation Sans";font-size:26px;font-weight:400;color:#ffffff;letter-spacing:-0.325px;'>Table</div>
<div class='t' style='left:2497.50px;top:486.50px;font-family:"Liberation Sans";font-size:26px;font-weight:400;color:#ffffff;letter-spacing:0.133px;'>Statistics</div>
<div class='t' style='left:762.50px;top:573.40px;font-family:"Liberation Sans";font-size:25px;font-weight:400;color:#5f3d9f;letter-spacing:0.050px;'>gateway–service</div>
<div class='t' style='left:1016.60px;top:573.40px;font-family:"Liberation Sans";font-size:25px;font-weight:400;color:#3d8ad8;letter-spacing:-0.007px;'>backend–service</div>
<div class='t' style='left:2450.00px;top:576.20px;font-family:"Liberation Sans";font-size:27px;font-weight:400;color:#ffffff;letter-spacing:0.309px;'>Export image</div>
<div class='t' style='left:1858.70px;top:639.20px;font-family:"Liberation Sans";font-size:20px;font-weight:400;color:#3d4249;'>0</div>
<div class='t' style='left:1916.45px;top:639.20px;font-family:"Liberation Sans";font-size:20px;font-weight:400;color:#3d4249;'>10</div>
<div class='t' style='left:1980.20px;top:639.20px;font-family:"Liberation Sans";font-size:20px;font-weight:400;color:#3d4249;'>20</div>
<div class='t' style='left:2043.95px;top:639.20px;font-family:"Liberation Sans";font-size:20px;font-weight:400;color:#3d4249;'>30</div>
<div class='t' style='left:2108.20px;top:639.20px;font-family:"Liberation Sans";font-size:20px;font-weight:400;color:#3d4249;'>40</div>
<div class='t' style='left:2171.45px;top:639.20px;font-family:"Liberation Sans";font-size:20px;font-weight:400;color:#3d4249;'>50</div>
<div class='t' style='left:2235.20px;top:639.20px;font-family:"Liberation Sans";font-size:20px;font-weight:400;color:#3d4249;'>60</div>
<div class='t' style='left:2298.95px;top:639.20px;font-family:"Liberation Sans";font-size:20px;font-weight:400;color:#3d4249;'>70</div>
<div class='t' style='left:2362.70px;top:639.20px;font-family:"Liberation Sans";font-size:20px;font-weight:400;color:#3d4249;'>80</div>
<div class='t' style='left:2426.45px;top:639.20px;font-family:"Liberation Sans";font-size:20px;font-weight:400;color:#3d4249;'>90</div>
<div class='t' style='left:2484.70px;top:639.20px;font-family:"Liberation Sans";font-size:20px;font-weight:400;color:#3d4249;'>100</div>
<div class='t' style='left:2549.45px;top:639.20px;font-family:"Liberation Sans";font-size:20px;font-weight:400;color:#3d4249;'>110</div>
<div class='t' style='left:828.00px;top:724.20px;font-family:"Liberation Sans";font-size:27px;font-weight:400;color:#2b2b2b;letter-spacing:0.154px;'>/gateway/hello</div>
<div class='t' style='left:826.00px;top:763.30px;font-family:"Liberation Sans";font-size:23.5px;font-weight:400;color:#c2c2c2;letter-spacing:0.110px;'>Http – spring–webflux</div>
<div class='t' style='left:851.00px;top:820.00px;font-family:"Liberation Sans";font-size:27px;font-weight:400;color:#2b2b2b;letter-spacing:-0.377px;'>SpringCloudGateway/RoutingFilter</div>
<div class='t' style='left:851.00px;top:859.10px;font-family:"Liberation Sans";font-size:23.5px;font-weight:400;color:#c2c2c2;letter-spacing:-0.183px;'>Unknown – spring–cloud–gateway</div>
<div class='t' style='left:875.00px;top:916.00px;font-family:"Liberation Sans";font-size:27px;font-weight:400;color:#2b2b2b;letter-spacing:-0.566px;'>SpringCloudGateway/sendRequest</div>
<div class='t' style='left:874.00px;top:955.10px;font-family:"Liberation Sans";font-size:23.5px;font-weight:400;color:#c2c2c2;letter-spacing:0.031px;'>Http – spring–cloud–gateway</div>
<div class='t' style='left:899.00px;top:1012.00px;font-family:"Liberation Sans";font-size:27px;font-weight:400;color:#2b2b2b;letter-spacing:-0.022px;'>GET:/hello</div>
<div class='t' style='left:898.00px;top:1051.10px;font-family:"Liberation Sans";font-size:23.5px;font-weight:400;color:#c2c2c2;letter-spacing:-0.020px;'>Http – SpringMVC</div>
<div class='t' style='left:1723.60px;top:1703.50px;font-family:"Liberation Mono";font-size:30px;font-weight:400;color:#404757;transform:scaleX(0.7256);transform-origin:2px 0;'>2022-04-19 13:57 ~ 2022-04-19 14:12</div>
<div class='t' style='left:2293.30px;top:1704.20px;font-family:"Liberation Sans";font-size:26px;font-weight:400;color:#404757;letter-spacing:-1.300px;'>En</div>
<div class='t' style='left:2352.00px;top:1704.20px;font-family:"Liberation Sans";font-size:26px;font-weight:400;color:#404757;letter-spacing:-0.786px;'>Server Zone UTC</div>
<div class='t' style='left:2553.20px;top:1701.50px;font-family:"Liberation Sans";font-size:26px;font-weight:400;color:#404757;'>+</div>
<div class='t' style='left:2571.30px;top:1706.00px;font-family:"Liberation Sans";font-size:27px;font-weight:400;color:#404757;'>0</div>
</body></html>
